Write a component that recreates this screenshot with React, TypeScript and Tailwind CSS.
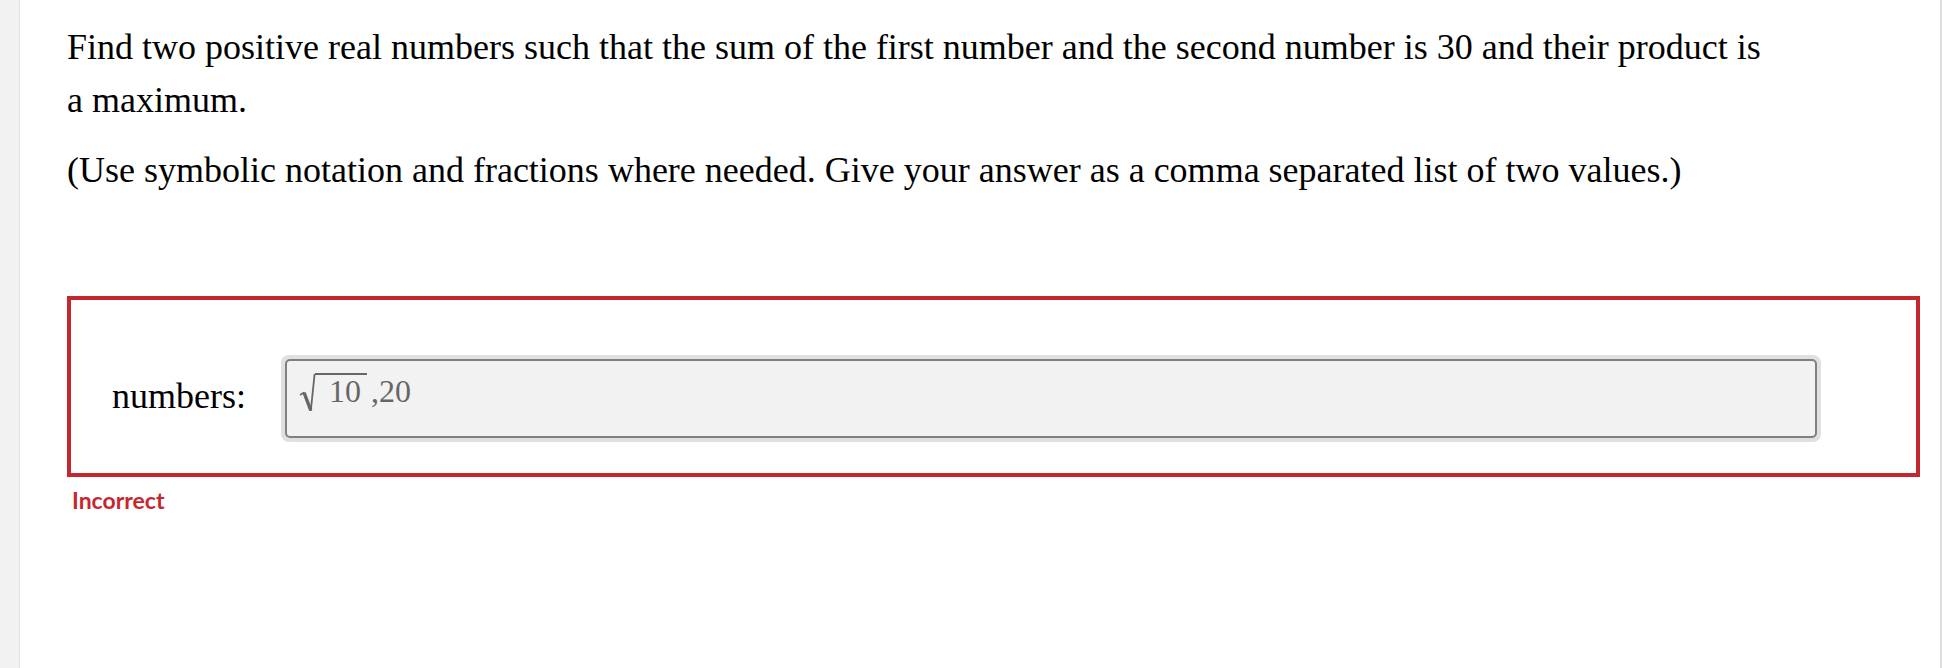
import React from 'react';

const serif = { fontFamily: '"Liberation Serif", "Times New Roman", serif' };

const Radical: React.FC = () => (
  <svg width="17" height="39" viewBox="0 0 17 39" className="shrink-0">
    <path d="M1 22 L5 19.5" stroke="#666666" strokeWidth="1.6" fill="none" />
    <path d="M5 19.5 L11.8 37.5" stroke="#666666" strokeWidth="3.4" fill="none" />
    <path d="M11.8 37.8 L15.6 1" stroke="#666666" strokeWidth="1.8" fill="none" />
  </svg>
);

const App: React.FC = () => {
  return (
    <div className="flex min-h-[668px] bg-white">
      {/* left rail */}
      <div className="w-[20px] shrink-0 bg-[#f2f2f2] border-r border-[#e0e0e0]" />

      <main className="flex-1 pl-[47px] pr-[20px] pt-[21px]">
        <div style={serif} className="max-w-[1705px] text-[36px] leading-[53px] text-black">
          <p>
            Find two positive real numbers such that the sum of the first number and the second number is 30 and
            their product is a maximum.
          </p>
          <p className="mt-[17px]">
            (Use symbolic notation and fractions where needed. Give your answer as a comma separated list of two
            values.)
          </p>
        </div>

        {/* answer box */}
        <div className="mt-[99px] border-4 border-[#c4282e] pl-[41px] pr-[95px] pt-[55px] pb-[31px]">
          <div className="flex items-center">
            <label style={serif} className="w-[169px] shrink-0 pb-[5px] text-[36px] leading-[40px] text-black">
              numbers:
            </label>
            <div className="flex-1 rounded-[8px] bg-[#e0e0e0] p-[4px]">
              <div className="h-[79px] rounded-[5px] border-2 border-[#808080] bg-[#f2f2f2] pl-[12px] pt-[12px]">
                <div style={serif} className="flex items-start text-[32px] leading-[32px] text-[#666666]">
                  <Radical />
                  <span className="-ml-[1px] border-t-2 border-[#666666] pl-[14px] pr-[6px]">10</span>
                  <span className="pl-[4px] pt-[2px]">,20</span>
                </div>
              </div>
            </div>
          </div>
        </div>

        <div
          style={{ fontFamily: 'Lato, "Open Sans", sans-serif' }}
          className="mt-[9px] pl-[5px] text-[23px] leading-[28px] font-bold text-[#c4282e]"
        >
          Incorrect
        </div>
      </main>

      {/* right rail */}
      <div className="w-[2px] shrink-0 bg-[#dcdcdc]" />
    </div>
  );
};

export default App;
